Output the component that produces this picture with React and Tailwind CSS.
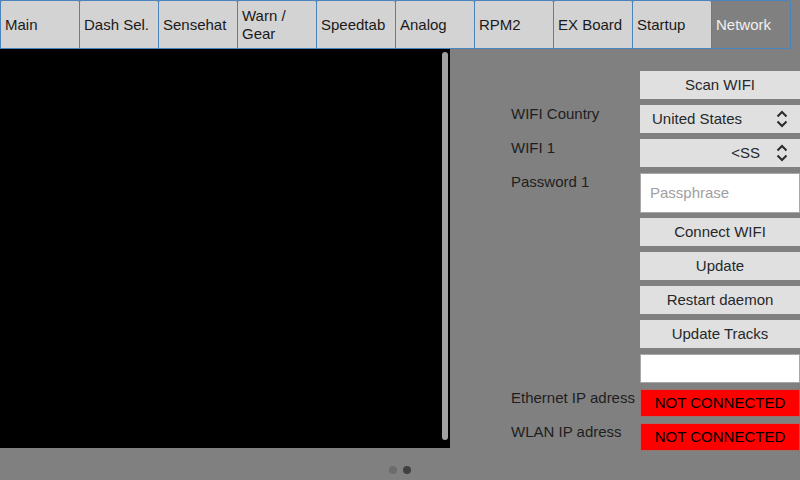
const tabs = ["Main", "Dash Sel.", "Sensehat", "Warn / Gear", "Speedtab", "Analog", "RPM2", "EX Board", "Startup", "Network"];

function Chevrons() {
  return (
    <svg width="12" height="20" viewBox="0 0 12 20" className="shrink-0">
      <path d="M1.5 7.5 L6 3 L10.5 7.5" fill="none" stroke="#2a2a2a" strokeWidth="2" />
      <path d="M1.5 12.5 L6 17 L10.5 12.5" fill="none" stroke="#2a2a2a" strokeWidth="2" />
    </svg>
  );
}

function Button({ children }) {
  return (
    <div className="flex h-[28px] items-center justify-center bg-[#e0e0e0] text-[#26282a]">
      {children}
    </div>
  );
}

function Label({ children }) {
  return <div className="leading-[18px] text-[#1e1e1e]">{children}</div>;
}

export default function App() {
  return (
    <div
      className="h-[480px] w-[800px] overflow-hidden bg-[#808080] text-[15px]"
      style={{ fontFamily: '"Liberation Sans", Arial, sans-serif' }}
    >
      <div className="flex h-[49px]">
        {tabs.map((t, i) => {
          const active = t === "Network";
          return (
            <div
              key={t}
              className={
                "flex items-center rounded-t-[2px] border-y border-l border-[#4a84bf] pl-[4px] leading-[18px] " +
                (i === tabs.length - 1 ? "w-[80px] border-r " : "w-[79px] ") +
                (active ? "bg-[#808080] text-[#f0f0f0]" : "bg-[#d3d3d3] text-[#1a1a1a]")
              }
            >
              {t === "Warn / Gear" ? (
                <span>
                  Warn /<br />
                  Gear
                </span>
              ) : (
                t
              )}
            </div>
          );
        })}
      </div>

      <div className="flex h-[399px] items-start">
        <div className="flex h-[399px] w-[450px] shrink-0 justify-end bg-black pr-[2px] pt-[3px]">
          <div className="h-[388px] w-[6px] rounded-full bg-[#a0a0a0]" />
        </div>

        <div className="ml-[61px] grid w-[289px] grid-cols-[129px_160px] gap-y-[6px] pt-[22px]">
          <div />
          <Button>Scan WIFI</Button>

          <Label>WIFI Country</Label>
          <div className="flex h-[28px] items-center justify-between bg-[#e0e0e0] pl-[12px] pr-[12px] text-[#26282a]">
            <span>United States</span>
            <Chevrons />
          </div>

          <Label>WIFI 1</Label>
          <div className="flex h-[28px] items-center justify-end gap-[16px] bg-[#e0e0e0] pr-[12px] text-[#26282a]">
            <span>&lt;SS</span>
            <Chevrons />
          </div>

          <Label>Password 1</Label>
          <div className="mb-[-1px] flex h-[40px] items-center border border-[#a8a8a8] bg-white pl-[9px] text-[#a0a0a0]">
            Passphrase
          </div>

          <div />
          <Button>Connect WIFI</Button>
          <div />
          <Button>Update</Button>
          <div />
          <Button>Restart daemon</Button>
          <div />
          <Button>Update Tracks</Button>
          <div />
          <div className="h-[29px] border border-[#a8a8a8] bg-white" />

          <Label>Ethernet IP adress</Label>
          <div className="flex h-[28px] items-center justify-center border border-[#9a7070] bg-[#ff0000] text-black">
            NOT CONNECTED
          </div>
          <Label>WLAN IP adress</Label>
          <div className="flex h-[28px] items-center justify-center border border-[#9a7070] bg-[#ff0000] text-black">
            NOT CONNECTED
          </div>
        </div>
      </div>

      <div className="flex justify-center gap-[6px] pt-[18px]">
        <div className="h-[8px] w-[8px] rounded-full bg-[#6c6c6c]" />
        <div className="h-[8px] w-[8px] rounded-full bg-[#404040]" />
      </div>
    </div>
  );
}
